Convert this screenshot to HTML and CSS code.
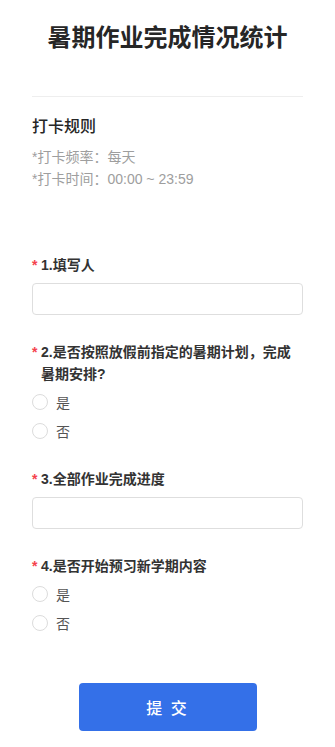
FILE: index.html
```html
<!DOCTYPE html>
<html lang="zh-CN">
<head>
<meta charset="utf-8">
<meta name="viewport" content="width=device-width, initial-scale=1">
<title>暑期作业完成情况统计</title>
<link rel="stylesheet" href="styles.css">
</head>
<body>
<div class="page">
  <header class="header">
    <h1 class="title">暑期作业完成情况统计</h1>
  </header>
  <section class="rules">
    <h2 class="rules-title">打卡规则</h2>
    <p class="rule">*打卡频率：每天</p>
    <p class="rule">*打卡时间：00:00 ~ 23:59</p>
  </section>
  <form class="form">
    <div class="question">
      <div class="label"><span class="star">*</span><span class="label-text">1.填写人</span></div>
      <input class="input" type="text">
    </div>
    <div class="question">
      <div class="label label--choice"><span class="star">*</span><span class="label-text">2.是否按照放假前指定的暑期计划，完成暑期安排?</span></div>
      <div class="options">
        <label class="option"><span class="radio"></span><span class="option-text">是</span></label>
        <label class="option"><span class="radio"></span><span class="option-text">否</span></label>
      </div>
    </div>
    <div class="question">
      <div class="label"><span class="star">*</span><span class="label-text">3.全部作业完成进度</span></div>
      <input class="input" type="text">
    </div>
    <div class="question">
      <div class="label label--choice"><span class="star">*</span><span class="label-text">4.是否开始预习新学期内容</span></div>
      <div class="options">
        <label class="option"><span class="radio"></span><span class="option-text">是</span></label>
        <label class="option"><span class="radio"></span><span class="option-text">否</span></label>
      </div>
    </div>
    <div class="actions">
      <button class="submit" type="button">提 交</button>
    </div>
  </form>
</div>
</body>
</html>
```

FILE: styles.css
```css
* { box-sizing: border-box; }
html, body { margin: 0; padding: 0; background: #fff; }
body {
  font-family: "Liberation Sans", "Noto Sans CJK SC", sans-serif;
  color: #333;
}
.page { padding: 0 32px; }
.header {
  padding: 22px 0 42px;
  border-bottom: 1px solid #eeeeee;
}
.title {
  margin: 0;
  font-size: 24px;
  line-height: 32px;
  font-weight: 700;
  color: #262626;
  text-align: center;
}
.rules { padding-top: 18px; }
.rules-title {
  margin: 0 0 7px;
  font-size: 16px;
  line-height: 24px;
  font-weight: 500;
  color: #262626;
}
.rule {
  margin: 0;
  font-size: 14px;
  line-height: 22px;
  color: #9e9e9e;
}
.form { padding-top: 64px; }
.question { margin-bottom: 26px; }
.label {
  display: flex;
  font-size: 14px;
  line-height: 22px;
  font-weight: 700;
  color: #333;
  margin-bottom: 7px;
}
.label--choice { margin-bottom: 6px; }
.star {
  color: #f5424d;
  width: 9px;
  flex: none;
  font-weight: 700;
}
.label-text { flex: 1; }
.input {
  display: block;
  width: 100%;
  height: 32px;
  border: 1px solid #dedede;
  border-radius: 4px;
  background: #fff;
  outline: none;
}
.options { display: flex; flex-direction: column; gap: 7px; }
.option {
  display: flex;
  align-items: center;
  height: 22px;
  font-size: 14px;
  color: #555;
}
.radio {
  width: 16px;
  height: 16px;
  border: 1px solid #dcdcdc;
  border-radius: 50%;
  margin-right: 8px;
  flex: none;
}
.actions {
  display: flex;
  justify-content: center;
  padding-top: 23px;
}
.submit {
  width: 178px;
  height: 48px;
  border: none;
  border-radius: 4px;
  background: #3470e8;
  color: #fff;
  font-family: inherit;
  font-size: 16px;
  font-weight: 500;
  letter-spacing: 2px;
}
```
